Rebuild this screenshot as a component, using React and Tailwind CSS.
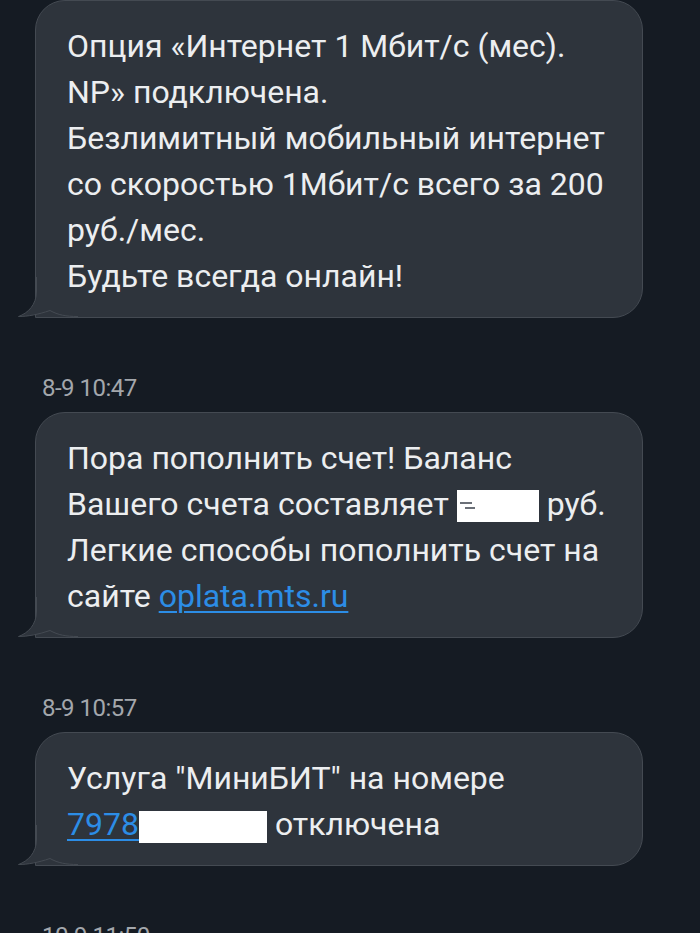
import React from 'react';

const Tail = () => (
  <svg
    className="absolute left-[-18px] bottom-0 w-[60px] h-[40px]"
    viewBox="0 0 60 40"
    fill="none"
  >
    <path
      d="M18.5 0 L18.5 14 C18.5 28 10 36 0.5 39.5 C10 39.5 20 37.5 32 33.5 C40 38 48 39.5 60 39.5 L60 0 Z"
      fill="#2e343c"
    />
    <path
      d="M18.5 0 L18.5 14 C18.5 28 10 36 0.5 39.5 C10 39.5 20 37.5 32 33.5 C40 38 48 39.5 60 39.5"
      stroke="#444a52"
      strokeWidth="1"
    />
  </svg>
);

const Bubble = ({ children }) => (
  <div className="relative w-[608px] rounded-[30px] rounded-bl-none border border-[#444a52] bg-[#2e343c] pl-[31px] pr-4 pt-[22px] pb-[18px] text-[32px] leading-[46px] text-[#eceef0]">
    <Tail />
    <div className="relative">{children}</div>
  </div>
);

const Stamp = ({ children }) => (
  <div className="ml-[7px] mt-[58px] mb-[12px] text-[24px] leading-[24px] tracking-[-0.5px] text-[#a3a7ac]">
    {children}
  </div>
);

export default function App() {
  return (
    <div
      className="h-[933px] w-[700px] overflow-hidden bg-[#151b23] pl-[35px]"
      style={{ fontFamily: 'Roboto, "Noto Sans", sans-serif' }}
    >
      {/* first message, top edge at the window top */}
      <Bubble>
        Опция «Интернет 1 Мбит/с (мес).
        <br />
        NP» подключена.
        <br />
        Безлимитный мобильный интернет
        <br />
        со скоростью 1Мбит/с всего за 200
        <br />
        руб./мес.
        <br />
        Будьте всегда онлайн!
      </Bubble>

      <Stamp>8-9 10:47</Stamp>
      <Bubble>
        Пора пополнить счет! Баланс
        <br />
        Вашего счета составляет{' '}
        <span className="relative inline-block h-[32px] w-[82px] bg-white align-[-7px]">
          <span className="absolute left-[3px] top-[12px] h-[2px] w-[12px] bg-[#6b7078]" />
          <span className="absolute left-[8px] top-[17px] h-[2px] w-[10px] bg-[#6b7078]" />
        </span>{' '}
        руб.
        <br />
        Легкие способы пополнить счет на
        <br />
        сайте{' '}
        <span className="text-[#2c8de6] underline decoration-2 underline-offset-[4px]">
          oplata.mts.ru
        </span>
      </Bubble>

      <Stamp>8-9 10:57</Stamp>
      <Bubble>
        Услуга "МиниБИТ" на номере
        <br />
        <span className="text-[#2c8de6]">
          <span className="underline decoration-2 underline-offset-[4px]">7978</span>
          <span className="inline-block h-[32px] w-[128px] bg-white align-[-8px]" />
        </span>{' '}
        отключена
      </Bubble>

      <Stamp>10-9 11:50</Stamp>
    </div>
  );
}
